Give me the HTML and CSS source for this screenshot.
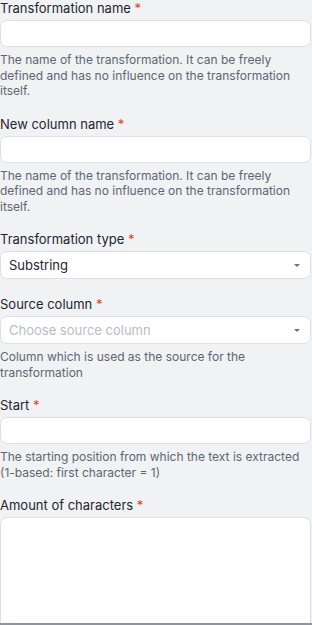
FILE: index.html
```html
<!DOCTYPE html>
<html lang="en">
<head>
  <meta charset="UTF-8">
  <meta name="viewport" content="width=device-width, initial-scale=1.0">
  <title>Transformation</title>
  <link rel="stylesheet" href="styles.css">
</head>
<body>

  <form class="transform-form">
    <!-- 이름 -->
    <div class="field">
      <label class="field-label">Transformation name <span class="req">*</span></label>
      <input class="field-input" type="text">
      <div class="field-help">The name of the transformation. It can be freely defined and has no influence on the transformation itself.</div>
    </div>

    <div class="field">
      <label class="field-label">New column name <span class="req">*</span></label>
      <input class="field-input" type="text">
      <div class="field-help">The name of the transformation. It can be freely defined and has no influence on the transformation itself.</div>
    </div>

    <!-- 선택 박스 -->
    <div class="field">
      <label class="field-label">Transformation type <span class="req">*</span></label>
      <div class="field-select">
        <span class="select-value">Substring</span>
        <span class="select-caret"></span>
      </div>
    </div>

    <div class="field">
      <label class="field-label">Source column <span class="req">*</span></label>
      <div class="field-select">
        <span class="select-value placeholder">Choose source column</span>
        <span class="select-caret"></span>
      </div>
      <div class="field-help">Column which is used as the source for the transformation</div>
    </div>

    <div class="field">
      <label class="field-label">Start <span class="req">*</span></label>
      <input class="field-input" type="text">
      <div class="field-help">The starting position from which the text is extracted (1-based: first character = 1)</div>
    </div>

    <div class="field last">
      <label class="field-label">Amount of characters <span class="req">*</span></label>
      <div class="field-area"></div>
    </div>
  </form>

  <div class="footer-line"></div>

</body>
</html>
```

FILE: styles.css
```css
body {
  font-family: 'Inter', 'Noto Sans', sans-serif;
  margin: 0;
  background-color: #f1f2f4;
  overflow: hidden;
}

.transform-form {
  width: 311px;
}

.field {
  margin-bottom: 17px;
}

.field.last {
  margin-bottom: 0;
}

.field-label {
  display: block;
  font-size: 13px;
  line-height: 16px;
  color: #1d2530;
  margin-bottom: 4px;
}

.req {
  color: #d9452b;
}

.field-input,
.field-select,
.field-area {
  display: block;
  box-sizing: border-box;
  width: 100%;
  height: 27px;
  margin: 0;
  padding: 0 8px;
  background-color: #ffffff;
  border: 1px solid #dcdfe6;
  border-radius: 7px;
  font-family: inherit;
  font-size: 13px;
}

.field-select {
  display: flex;
  align-items: center;
  justify-content: space-between;
  height: 28px;
}

.select-value {
  color: #1d2530;
  font-size: 13px;
}

.select-value.placeholder {
  color: #b9bdc5;
}

.select-caret {
  width: 0;
  height: 0;
  margin-right: 2px;
  border-left: 3px solid transparent;
  border-right: 3px solid transparent;
  border-top: 3px solid #6b7280;
}

.field-area {
  height: 106px;
  border-bottom: none;
  border-radius: 7px 7px 0 0;
}

.field-help {
  margin-top: 5px;
  font-size: 12px;
  line-height: 15.5px;
  color: #5d6673;
}

.footer-line {
  height: 3px;
  background-color: #8e959e;
}
```
